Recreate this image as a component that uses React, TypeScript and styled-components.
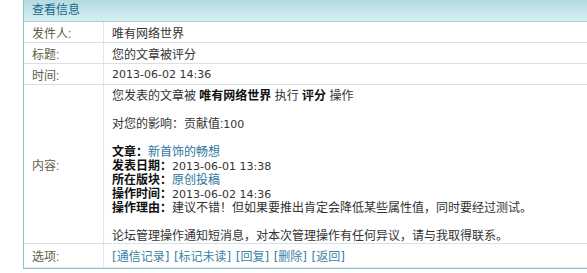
import React from "react";
import styled, { createGlobalStyle } from "styled-components";

const Global = createGlobalStyle`
  html, body { margin: 0; padding: 0; background: #fff; overflow: hidden; }
  body { font-family: "Liberation Sans", "Noto Sans CJK SC", sans-serif; font-size: 12px; color: #333; }
`;

const Page = styled.div`
  box-sizing: border-box;
  padding-left: 23px;
  width: 587px;
`;

const Panel = styled.div`
  border-left: 1px solid #8ec1cb;
  border-bottom: 1px solid #8ec1cb;
`;

const Header = styled.div`
  height: 21px;
  line-height: 21px;
  padding-left: 8px;
  background: linear-gradient(#b4dae0, #d6eff2);
  border-bottom: 1px solid #a3cdd4;
  color: #17698b;
  font-size: 12px;
`;

const Row = styled.div<{ $h?: number }>`
  display: grid;
  grid-template-columns: 80px 1fr;
  min-height: ${(p) => p.$h ?? 20}px;
  border-bottom: 1px solid ${(p) => (p.$h === 23 ? "#e3ebed" : "#d8e1e3")};
`;

const Label = styled.div`
  display: flex;
  align-items: center;
  padding-left: 8px;
  border-right: 1px solid #dfe7e9;
  color: #5d5d48;
`;

const Value = styled.div`
  display: flex;
  align-items: center;
  padding-left: 8px;
  color: #333;
`;

const Content = styled.div`
  padding: 4px 8px 0 8px;
  line-height: 14px;
  color: #333;
`;

const Line = styled.div<{ $gap?: boolean }>`
  height: 14px;
  white-space: nowrap;
  margin-top: ${(p) => (p.$gap ? 14 : 0)}px;
`;

const B = styled.b`
  font-weight: bold;
  color: #111;
`;

const Num = styled.span`
  font-family: "DejaVu Sans", sans-serif;
  font-size: 11px;
`;

const Link = styled.a`
  color: #2d76a0;
  text-decoration: none;
`;

const OptLinks = styled.div`
  display: flex;
  gap: 4.5px;
  align-items: center;
  padding-left: 8px;
  white-space: nowrap;
`;

const Opt = styled.a`
  font-family: "DejaVu Sans", "Noto Sans CJK SC", sans-serif;
  color: #3a82a6;
  text-decoration: none;
`;

export default function App() {
  return (
    <>
      <Global />
      <Page>
        <Panel>
          <Header>查看信息</Header>
          <Row>
            <Label>发件人:</Label>
            <Value>唯有网络世界</Value>
          </Row>
          <Row>
            <Label>标题:</Label>
            <Value>您的文章被评分</Value>
          </Row>
          <Row>
            <Label>时间:</Label>
            <Value><Num>2013-06-02 14:36</Num></Value>
          </Row>
          <Row $h={158}>
            <Label>内容:</Label>
            <Content>
              <Line>您发表的文章被 <B>唯有网络世界</B> 执行 <B>评分</B> 操作</Line>
              <Line $gap>对您的影响：贡献值:<Num>100</Num></Line>
              <Line $gap><B>文章：</B><Link>新首饰的畅想</Link></Line>
              <Line><B>发表日期：</B><Num>2013-06-01 13:38</Num></Line>
              <Line><B>所在版块：</B><Link>原创投稿</Link></Line>
              <Line><B>操作时间：</B><Num>2013-06-02 14:36</Num></Line>
              <Line><B>操作理由：</B>建议不错！但如果要推出肯定会降低某些属性值，同时要经过测试。</Line>
              <Line $gap>论坛管理操作通知短消息，对本次管理操作有任何异议，请与我取得联系。</Line>
            </Content>
          </Row>
          <Row $h={23}>
            <Label>选项:</Label>
            <OptLinks>
              <Opt>[通信记录]</Opt>
              <Opt>[标记未读]</Opt>
              <Opt>[回复]</Opt>
              <Opt>[删除]</Opt>
              <Opt>[返回]</Opt>
            </OptLinks>
          </Row>
        </Panel>
      </Page>
    </>
  );
}
